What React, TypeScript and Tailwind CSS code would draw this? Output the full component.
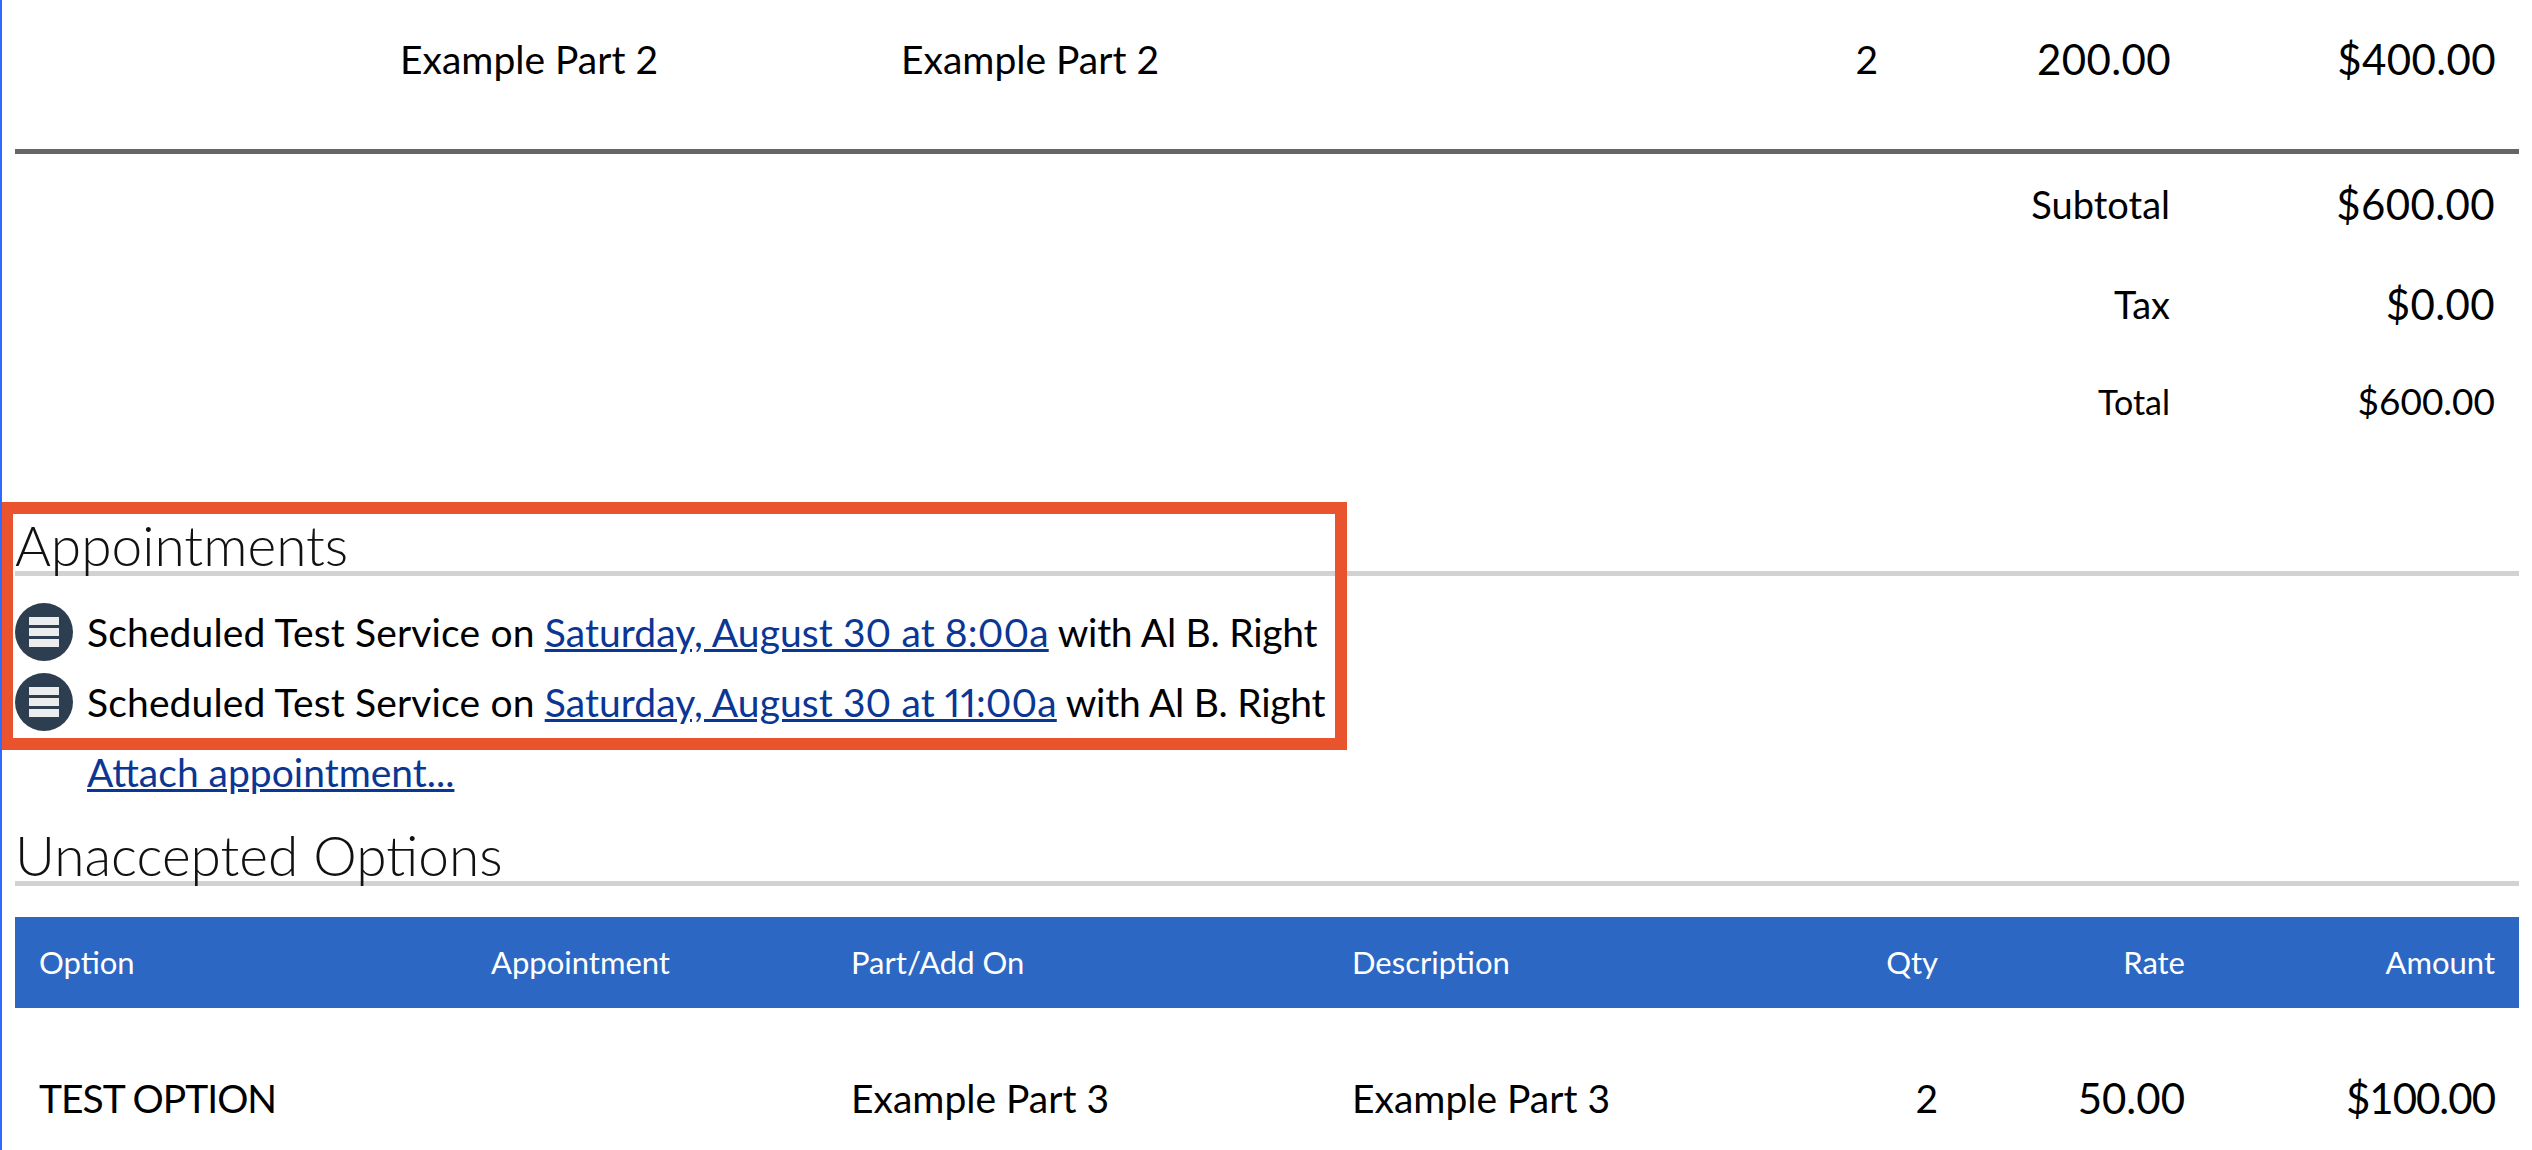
const font = "[font-family:Lato,'Liberation_Sans',sans-serif]";

function MenuBadge() {
    return (
        <span className="flex h-[58px] w-[58px] shrink-0 flex-col items-center justify-center gap-[3px] rounded-full bg-[#2c3e50]">
            <span className="h-[8px] w-[30px] bg-white/90" />
            <span className="h-[8px] w-[30px] bg-white/90" />
            <span className="h-[8px] w-[30px] bg-white/90" />
        </span>
    );
}

function SectionTitle({ title }: { title: string }) {
    return (
        <h2 className="h-[48px] border-b-[5px] border-[#d2d2d2] text-[55px] leading-[34px] font-light text-[#111]">
            {title}
        </h2>
    );
}

const appointments = [
    'Saturday, August 30 at 8:00a',
    'Saturday, August 30 at 11:00a',
];

const totals = [
    { label: 'Subtotal', value: '$600.00', rowClass: 'h-[100px]', valueClass: 'text-[42px] tracking-[0.4px]' },
    { label: 'Tax', value: '$0.00', rowClass: 'h-[100px]', valueClass: 'text-[42px] tracking-[0.4px]' },
    { label: 'Total', value: '$600.00', rowClass: 'h-[94px] text-[34px]', valueClass: 'text-[37px]' },
];

const optionHeaders = ['Option', 'Appointment', 'Part/Add On', 'Description'];
const optionCols = 'grid-cols-[452px_360px_501px_400px_186px_247px_310px]';

export default function App() {
    return (
        <div className={`relative h-[1150px] w-[2532px] overflow-hidden border-l-[2px] border-[#2f6bff] bg-white pr-[13px] pl-[13px] text-[38px] text-black ${font}`}>
            {/* Line items */}
            <div className="grid h-[149px] grid-cols-[385px_501px_800px_177px_293px_325px] items-center pr-[24px] pb-[31px] text-[39px]">
                <div />
                <div>Example Part 2</div>
                <div>Example Part 2</div>
                <div className="text-right">2</div>
                <div className="text-right text-[42px] tracking-[0.4px]">200.00</div>
                <div className="text-right text-[42px] tracking-[0.4px]">$400.00</div>
            </div>
            <div className="h-[5px] bg-[#666]" />

            <div className="pr-[24px]">
                {totals.map(t => (
                    <div key={t.label} className={`flex items-center justify-end ${t.rowClass}`}>
                        <span>{t.label}</span>
                        <span className={`w-[325px] text-right ${t.valueClass}`}>{t.value}</span>
                    </div>
                ))}
            </div>

            {/* Appointments */}
            <div className="mt-[80px]">
                <SectionTitle title="Appointments" />
                <div className="mt-[27px] flex flex-col gap-[12px] text-[39px]">
                    {appointments.map(a => (
                        <div key={a} className="flex h-[58px] items-center gap-[14px] whitespace-pre">
                            <MenuBadge />
                            <span>
                                <span className="tracking-[0.15px]">Scheduled Test Service on </span>
                                <a href="#" className="tracking-[0.1px] text-[#0b3694] underline proportional-nums">{a}</a>
                                <span className="tracking-[-0.25px]"> with Al B. Right</span>
                            </span>
                        </div>
                    ))}
                </div>
                <a href="#" className="mt-[18px] ml-[72px] block text-[39px] leading-[46px] text-[#0b3694] underline">
                    Attach appointment...
                </a>
            </div>

            {/* Unaccepted options */}
            <div className="mt-[43px]">
                <SectionTitle title="Unaccepted Options" />
                <div className={`mt-[31px] grid h-[91px] items-center bg-[#2c67c4] px-[24px] text-[31px] text-white ${optionCols}`}>
                    {optionHeaders.map(h => (
                        <div key={h}>{h}</div>
                    ))}
                    <div className="text-right">Qty</div>
                    <div className="text-right">Rate</div>
                    <div className="text-right">Amount</div>
                </div>
                <div className={`grid h-[180px] items-center px-[24px] text-[39px] ${optionCols}`}>
                    <div className="tracking-[-1px]">TEST OPTION</div>
                    <div />
                    <div>Example Part 3</div>
                    <div>Example Part 3</div>
                    <div className="text-right">2</div>
                    <div className="text-right text-[42px]">50.00</div>
                    <div className="text-right text-[42px] tracking-[-1px]">$100.00</div>
                </div>
            </div>

            {/* Highlight box drawn over the screenshot */}
            <div className="pointer-events-none absolute top-[502px] left-[-1px] h-[248px] w-[1346px] border-[12px] border-[#e9532d]" />
        </div>
    );
}
